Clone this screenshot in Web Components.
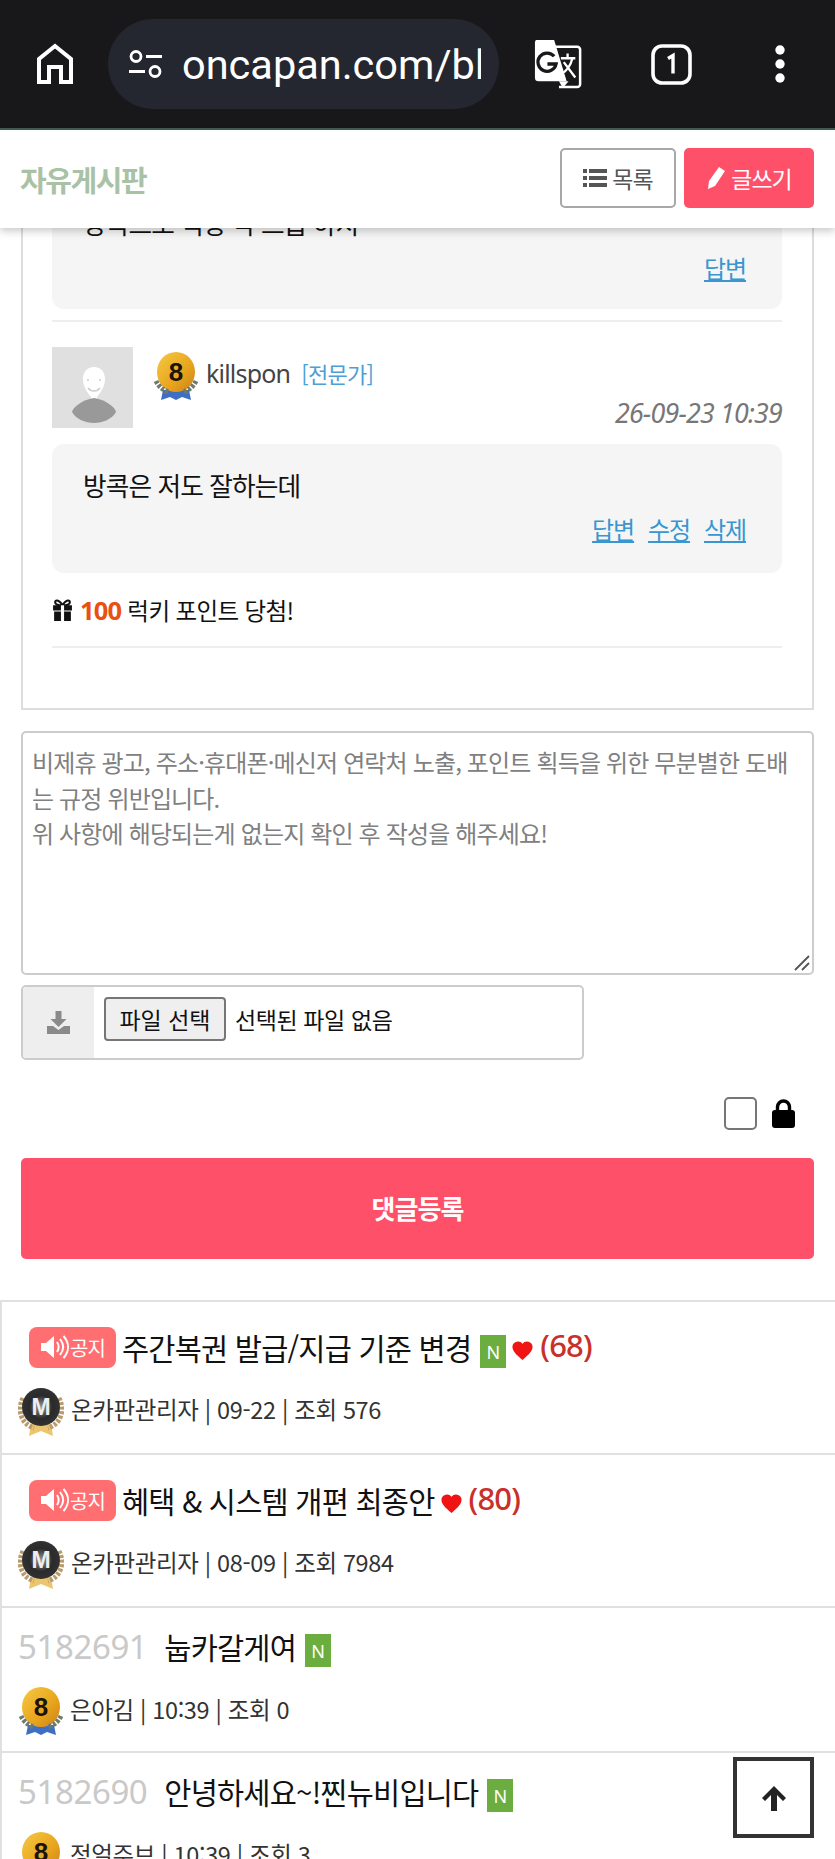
<!DOCTYPE html>
<html lang="ko">
<head>
<meta charset="utf-8">
<title>자유게시판</title>
<style>
  html, body { margin: 0; height: 1859px; overflow: hidden; background: #fff; }
  body { font-family: "Noto Sans CJK KR", "Noto Sans", sans-serif; color: #111; position: relative; }
</style>
</head>
<body>
<browser-bar></browser-bar>
<board-header></board-header>
<page-content>
  <comment-card>
    <comment-body clipped actions="답변">방콕으로 직항 각 드릅 하지</comment-body>
    <comment-head name="killspon" date="26-09-23 10:39"></comment-head>
    <comment-body actions="답변,수정,삭제">방콕은 저도 잘하는데</comment-body>
    <lucky-line amount="100"></lucky-line>
  </comment-card>
  <reply-form></reply-form>
  <post-list>
    <post-row notice title="주간복권 발급/지급 기준 변경" isnew likes="68" medal="m" meta="온카판관리자 | 09-22 | 조회 576"></post-row>
    <post-row notice title="혜택 &amp; 시스템 개편 최종안" likes="80" medal="m" meta="온카판관리자 | 08-09 | 조회 7984"></post-row>
    <post-row num="5182691" title="눕카갈게여" isnew medal="8" meta="은아김 | 10:39 | 조회 0"></post-row>
    <post-row num="5182690" title="안녕하세요~!찐뉴비입니다" isnew medal="8" meta="정얼주브 | 10:39 | 조회 3"></post-row>
  </post-list>
</page-content>
<scroll-top></scroll-top>

<script>
// medal drawn once here, used by the comment head and the post rows
function medalSvg(kind, size) {
  const id = "g" + Math.random().toString(36).slice(2, 7);
  if (kind === "m") {
    return `<svg width="${size}" height="${size + 6}" viewBox="0 0 46 52" aria-hidden="true">
      <defs><radialGradient id="${id}" cx=".5" cy=".5" r=".55"><stop offset="0" stop-color="#999"/><stop offset=".55" stop-color="#2a2a2a"/><stop offset="1" stop-color="#333"/></radialGradient></defs>
      <path d="M13 38l-2 12 12-5 12 5-2-12z" fill="#ecc66e"/>
      <path d="M5 12C-1 24 3 38 16 42M41 12c6 12 2 26-11 30" fill="none" stroke="#b99b6b" stroke-width="5" stroke-dasharray="3 1.5"/>
      <circle cx="23" cy="21" r="19" fill="url(#${id})"/>
      <text x="23" y="29" text-anchor="middle" font-family="Liberation Sans" font-weight="700" font-size="23" fill="#eee">M</text>
    </svg>`;
  }
  return `<svg width="${size}" height="${size + 6}" viewBox="0 0 46 52" aria-hidden="true">
    <defs><linearGradient id="${id}" x1="0" y1="0" x2="1" y2="1"><stop offset="0" stop-color="#f6c945"/><stop offset=".6" stop-color="#e8a41c"/><stop offset="1" stop-color="#c9821a"/></linearGradient></defs>
    <path d="M10 38l-2 10 9-3 6 3 6-3 9 3-2-10z" fill="#3f6fc4"/>
    <ellipse cx="23" cy="20" rx="19" ry="20" fill="url(#${id})"/>
    <path d="M3 29c3 6 7 9 13 11M43 29c-3 6-7 9-13 11" fill="none" stroke="#6f7a6a" stroke-width="5" stroke-dasharray="3 1.5"/>
    <text x="23" y="29" text-anchor="middle" font-family="Liberation Sans" font-weight="700" font-size="26" fill="#1b1408">8</text>
  </svg>`;
}

class BrowserBar extends HTMLElement {
  constructor() {
    super();
    this.attachShadow({ mode: "open" });
    this.shadowRoot.innerHTML = `
      <style>
        :host { display: flex; align-items: center; height: 128px; background: #18181a; border-bottom: 2px solid #3f5f58; color: #fff; box-sizing: content-box; }
        .home { margin-left: 36px; width: 38px; display: flex; }
        .omni { margin-left: 34px; width: 391px; height: 90px; flex: none; border-radius: 45px; background: #242630; display: flex; align-items: center; padding-left: 21px; box-sizing: border-box; overflow: hidden; }
        .url { font: 400 41.500px Roboto, sans-serif; margin-left: 20px; width: 299px; flex: none; overflow: hidden; white-space: nowrap; }
        .tr { margin-left: 34px; display: flex; }
        .tabs { margin-left: 68px; display: flex; }
        .dots { margin-left: 83px; display: flex; }
      </style>
      <span class="home"><svg width="38" height="42" viewBox="0 0 38 42"><path d="M3 39V16L19 3l16 13v23H25V24H13v15z" fill="none" stroke="#fff" stroke-width="4"/></svg></span>
      <div class="omni">
        <svg width="33" height="28" viewBox="0 0 33 28" style="flex:none"><g fill="none" stroke="#fff" stroke-width="2.800"><circle cx="7" cy="6.500" r="5"/><circle cx="26" cy="21.500" r="5"/><path d="M17 6.500h16M0 21.500h16"/></g></svg>
        <span class="url">oncapan.com/bl</span>
      </div>
      <span class="tr"><svg width="50" height="50" viewBox="0 0 52 52">
        <path d="M22 8h24a3 3 0 0 1 3 3v36a3 3 0 0 1-3 3H27" fill="none" stroke="#fff" stroke-width="2.600"/>
        <path d="M3 1h19l13 43H6a4 4 0 0 1-4-4V3z" fill="#fff"/>
        <path d="M27 44l4 7 6-7z" fill="#fff"/>
        <path d="M22 18a9.500 9.500 0 1 0 2 8H15" fill="none" stroke="#18181a" stroke-width="3.400"/>
        <path d="M29 20h15M36 15v5M41 20c-2 8-6 13-11 16M32 24l12 16" fill="none" stroke="#fff" stroke-width="2.400"/>
      </svg></span>
      <span class="tabs"><svg width="41" height="41" viewBox="0 0 41 41"><rect x="2" y="2" width="37" height="37" rx="9" fill="none" stroke="#fff" stroke-width="3.600"/><path d="M17 14.500l5-3v18" fill="none" stroke="#fff" stroke-width="3.400"/></svg></span>
      <span class="dots"><svg width="10" height="38" viewBox="0 0 10 38" fill="#fff"><circle cx="5" cy="5" r="4.700"/><circle cx="5" cy="19" r="4.700"/><circle cx="5" cy="33" r="4.700"/></svg></span>
    `;
  }
}

class BoardHeader extends HTMLElement {
  constructor() {
    super();
    this.attachShadow({ mode: "open" });
    this.shadowRoot.innerHTML = `
      <style>
        :host { display: flex; align-items: center; height: 98px; background: #fff; position: relative; z-index: 2; box-shadow: 0 3px 8px rgba(0,0,0,.22); padding: 0 21px 3px 20px; box-sizing: border-box; }
        .title { font-size: 29px; font-weight: 700; color: #a9c2a6; letter-spacing: -1.400px; flex: 1; position: relative; top: 1px; }
        .btn { height: 60px; box-sizing: border-box; border-radius: 5px; display: flex; align-items: center; justify-content: center; gap: 5px; font-size: 23px; letter-spacing: -1px; }
        .list { width: 116px; border: 2px solid #a8a8a8; color: #555; margin-right: 8px; }
        .write { width: 130px; background: #ff5069; color: #fff; }
      </style>
      <span class="title">자유게시판</span>
      <span class="btn list"><svg width="24" height="20" viewBox="0 0 24 20" fill="#555"><path d="M0 1h4v4H0zM6 1h18v4H6zM0 8h4v4H0zM6 8h18v4H6zM0 15h4v4H0zM6 15h18v4H6z"/></svg>목록</span>
      <span class="btn write"><svg width="20" height="23" viewBox="0 0 20 23" fill="#fff"><path d="M13 1l6 4-10 15-7 3 1-8z"/></svg>글쓰기</span>
    `;
  }
}

class PageContent extends HTMLElement {
  constructor() {
    super();
    this.attachShadow({ mode: "open" });
    this.shadowRoot.innerHTML = `
      <style>:host { display: block; height: 1631px; overflow: hidden; }</style>
      <slot></slot>
    `;
  }
}

class CommentCard extends HTMLElement {
  constructor() {
    super();
    this.attachShadow({ mode: "open" });
    this.shadowRoot.innerHTML = `
      <style>
        :host { display: block; margin: -30px 21px 0 21px; border: 2px solid #ddd; border-top: 0; padding: 0 30px 60px 29px; background: #fff; }
      </style>
      <slot></slot>
    `;
  }
}

class CommentBody extends HTMLElement {
  constructor() {
    super();
    this.attachShadow({ mode: "open" });
    const links = (this.getAttribute("actions") || "").split(",").map(a => `<a>${a}</a>`).join("");
    const clipped = this.hasAttribute("clipped");
    this.shadowRoot.innerHTML = `
      <style>
        :host { display: block; background: #f5f5f5; border-radius: 12px; box-sizing: border-box; padding: ${clipped ? "7px" : "23px"} 36px 0 31px; height: ${clipped ? "111px" : "129px"}; margin-top: ${clipped ? "0" : "16px"}; }
        .text { font-size: 25.700px; line-height: 36px; letter-spacing: -.9px; color: #111; white-space: nowrap; }
        .acts { display: flex; justify-content: flex-end; gap: 14px; font-size: 24px; line-height: 32px; margin-top: ${clipped ? "11px" : "10px"}; letter-spacing: -1.100px; }
        a { color: #3a96d0; text-decoration: underline; }
      </style>
      <div class="text"><slot></slot></div>
      <div class="acts">${links}</div>
    `;
  }
}

class CommentHead extends HTMLElement {
  constructor() {
    super();
    this.attachShadow({ mode: "open" });
    this.shadowRoot.innerHTML = `
      <style>
        :host { display: flex; border-top: 2px solid #eee; margin-top: 11px; padding-top: 25px; }
        .avatar { width: 81px; height: 81px; background: #e0e0e0; flex: none; display: flex; }
        .info { flex: 1; margin-left: 20px; height: 81px; }
        .who { display: flex; align-items: center; height: 52px; margin-top: 5px; }
        .name { font: 400 25px "Noto Sans", sans-serif; color: #444; margin-left: 7px; letter-spacing: -.8px; position: relative; top: -5px; }
        .rank { font-size: 22px; color: #4d9fd6; margin-left: 11px; letter-spacing: -.7px; position: relative; top: -5px; }
        .date { text-align: right; font: italic 400 26.800px/30px "Noto Sans", sans-serif; color: #777; letter-spacing: -.8px; margin-top: -6px; margin-right: 0; }
        svg { display: block; }
      </style>
      <div class="avatar"><svg width="81" height="81" viewBox="0 0 81 81">
        <path d="M43 20c7 0 11 5 11 12 0 8-5 14-8 18v4h-6v-4c-3-4-8-10-8-18 0-7 4-12 11-12z" fill="#fff" transform="translate(-1 0)"/>
        <circle cx="36" cy="33" r="1" fill="#ccc"/><circle cx="48" cy="33" r="1" fill="#ccc"/>
        <path d="M36 41c3 4 9 4 12 0" fill="none" stroke="#ccc" stroke-width="1.400"/>
        <path d="M42 51c12 2 21 9 22 14-4 7-13 11-22 11s-18-4-22-11c1-5 10-12 22-14z" fill="#999"/>
      </svg></div>
      <div class="info">
        <div class="who">${medalSvg("8", 46)}<span class="name">${this.getAttribute("name")}</span><span class="rank">[전문가]</span></div>
        <div class="date">${this.getAttribute("date")}</div>
      </div>
    `;
  }
}

class LuckyLine extends HTMLElement {
  constructor() {
    super();
    this.attachShadow({ mode: "open" });
    this.shadowRoot.innerHTML = `
      <style>
        :host { display: flex; align-items: center; gap: 5px; height: 73px; border-bottom: 2px solid #eee; font-size: 23.500px; letter-spacing: -.6px; }
        b { color: #e8510f; font: 700 25.500px "Noto Sans", sans-serif; margin: 0 1px 0 2px; letter-spacing: -.8px; }
      </style>
      <svg width="21" height="22" viewBox="0 0 20 21"><path d="M1 6h18v5H1zM2 12h16v9H2z" fill="#111"/><path d="M10 6C6 6 3 5 3 3s3-3 7 3c4-6 7-5 7-3s-3 3-7 3z" fill="none" stroke="#111" stroke-width="2"/><path d="M8.500 6h3v15h-3z" fill="#fff"/></svg>
      <b>${this.getAttribute("amount")}</b><span>럭키 포인트 당첨!</span>
    `;
  }
}

class ReplyForm extends HTMLElement {
  constructor() {
    super();
    this.attachShadow({ mode: "open" });
    this.shadowRoot.innerHTML = `
      <style>
        :host { display: block; margin: 21px 21px 0; }
        .area { height: 244px; border: 2px solid #ccc; border-radius: 5px; box-sizing: border-box; padding: 11px 9px; font-size: 24px; line-height: 35.500px; color: #808080; letter-spacing: -.85px; position: relative; word-break: break-all; }
        .grip { position: absolute; right: 1px; bottom: 1px; }
        .file { display: flex; align-items: center; width: 563px; height: 75px; margin-top: 10px; border: 2px solid #ccc; border-radius: 5px; box-sizing: border-box; overflow: hidden; font-size: 23px; }
        .ico { width: 71px; align-self: stretch; background: #eee; display: flex; align-items: center; justify-content: center; }
        .pick { margin: -7px 9px 0 10px; width: 122px; height: 44px; box-sizing: border-box; border: 2px solid #767676; border-radius: 4px; background: #efefef; display: flex; align-items: center; justify-content: center; color: #111; }
        .none { margin-top: -7px; color: #111; letter-spacing: -.4px; }
        .lock { display: flex; justify-content: flex-end; align-items: center; gap: 15px; padding-right: 19px; margin-top: 37px; height: 33px; }
        .box { width: 33px; height: 33px; box-sizing: border-box; border: 2px solid #767676; border-radius: 5px; }
        .send { margin-top: 28px; height: 101px; border-radius: 5px; background: #ff5069; color: #fff; font-size: 26px; font-weight: 700; letter-spacing: -.9px; display: flex; align-items: center; justify-content: center; padding-bottom: 3px; box-sizing: border-box; }
      </style>
      <div class="area">비제휴 광고, 주소·휴대폰·메신저 연락처 노출, 포인트 획득을 위한 무분별한 도배는 규정 위반입니다.<br>위 사항에 해당되는게 없는지 확인 후 작성을 해주세요!
        <svg class="grip" width="18" height="18" viewBox="0 0 18 18"><path d="M2 16L16 2M9 16l7-7" stroke="#555" stroke-width="1.800"/></svg>
      </div>
      <div class="file">
        <span class="ico"><svg width="23" height="23" viewBox="0 0 23 23" fill="#8a8a8a"><path d="M8.500 0h6v8h5l-8 8-8-8h5z"/><path d="M0 15h6l5.500 4 5.500-4h6v8H0z"/></svg></span>
        <span class="pick">파일 선택</span><span class="none">선택된 파일 없음</span>
      </div>
      <div class="lock">
        <span class="box"></span>
        <svg width="23" height="29" viewBox="0 0 23 29"><path d="M5.500 13V8a6 6 0 0 1 12 0v5" fill="none" stroke="#000" stroke-width="3.400"/><rect y="11" width="23" height="18" rx="3"/></svg>
      </div>
      <div class="send">댓글등록</div>
    `;
  }
}

class PostList extends HTMLElement {
  constructor() {
    super();
    this.attachShadow({ mode: "open" });
    this.shadowRoot.innerHTML = `
      <style>:host { display: block; margin-top: 41px; border-top: 2px solid #e0e0e0; border-left: 2px solid #e0e0e0; }</style>
      <slot></slot>
    `;
  }
}

class PostRow extends HTMLElement {
  constructor() {
    super();
    this.attachShadow({ mode: "open" });
    const notice = this.hasAttribute("notice");
    const isM = this.getAttribute("medal") === "m";
    const lead = notice
      ? `<span class="notice"><svg width="30" height="28" viewBox="0 0 30 28"><path d="M1 10h5l8-7v22l-8-7H1z" fill="#fff"/><path d="M17 9c2 3 2 7 0 10M20 6c4 5 4 11 0 16M23.500 3c6 7 6 15 0 22" fill="none" stroke="#fff" stroke-width="2"/></svg>공지</span>`
      : `<span class="num">${this.getAttribute("num")}</span>`;
    const likes = this.getAttribute("likes");
    this.shadowRoot.innerHTML = `
      <style>
        :host { display: block; box-sizing: border-box; height: ${notice ? "153px" : "145px"}; border-bottom: 2px solid #e0e0e0; padding: ${notice ? "23px 0 0 27px" : "16px 0 0 16px"}; }
        .top { display: flex; align-items: center; height: 44px; white-space: nowrap; }
        .notice { width: 87px; height: 41px; background: #ff6f72; border-radius: 8px; color: #fff; font-size: 20px; display: inline-flex; align-items: center; justify-content: center; letter-spacing: -.8px; margin-right: 6px; flex: none; }
        .num { font: 400 33px "Noto Sans", sans-serif; color: #c9c9c9; margin-right: 17px; letter-spacing: -.4px; }
        .title { font-size: 29.500px; letter-spacing: -.8px; color: #111; }
        .n { width: 26px; height: 33px; background: #6cad3f; color: #fff; font: 400 18px "Noto Sans", sans-serif; display: inline-flex; align-items: center; justify-content: center; margin-left: 9px; margin-top: 9px; flex: none; }
        .heart { margin-left: 6px; margin-top: 7px; }
        .cnt { font: 500 31px "Noto Sans", sans-serif; color: #c9302c; margin-left: 7px; letter-spacing: -.8px; margin-top: -5px; }
        .bot { display: flex; align-items: center; height: 52px; margin: ${notice ? "14px 0 0 -11px" : "15px 0 0 0"}; }
        .bot svg { margin-top: ${notice ? "6px" : "8px"}; }
        .meta { font-size: 23.500px; color: #333; letter-spacing: -.35px; margin-left: ${isM ? "7px" : "6px"}; }
        svg { display: block; flex: none; }
      </style>
      <div class="top">${lead}<span class="title">${this.getAttribute("title")}</span>
        ${this.hasAttribute("isnew") ? `<span class="n">N</span>` : ""}
        ${likes ? `<svg class="heart" width="21" height="19" viewBox="0 0 18 17"><path d="M9 17C3 12 0 9 0 5a5 5 0 0 1 9-2.500A5 5 0 0 1 18 5c0 4-3 7-9 12z" fill="#f01414"/></svg><span class="cnt">(${likes})</span>` : ""}
      </div>
      <div class="bot">${medalSvg(isM ? "m" : "8", 46)}<span class="meta">${this.getAttribute("meta")}</span></div>
    `;
  }
}

class ScrollTop extends HTMLElement {
  constructor() {
    super();
    this.attachShadow({ mode: "open" });
    this.shadowRoot.innerHTML = `
      <style>
        :host { position: absolute; right: 21px; top: 1757px; width: 81px; height: 81px; box-sizing: border-box; border: 4px solid #333; background: #fff; display: flex; align-items: center; justify-content: center; z-index: 3; }
      </style>
      <svg width="26" height="26" viewBox="0 0 26 26"><path d="M13 1L25 13l-3 3-6-6v16h-6V10l-6 6-3-3z" fill="#222"/></svg>
    `;
  }
}

customElements.define("browser-bar", BrowserBar);
customElements.define("board-header", BoardHeader);
customElements.define("page-content", PageContent);
customElements.define("comment-card", CommentCard);
customElements.define("comment-body", CommentBody);
customElements.define("comment-head", CommentHead);
customElements.define("lucky-line", LuckyLine);
customElements.define("reply-form", ReplyForm);
customElements.define("post-list", PostList);
customElements.define("post-row", PostRow);
customElements.define("scroll-top", ScrollTop);
</script>
</body>
</html>
